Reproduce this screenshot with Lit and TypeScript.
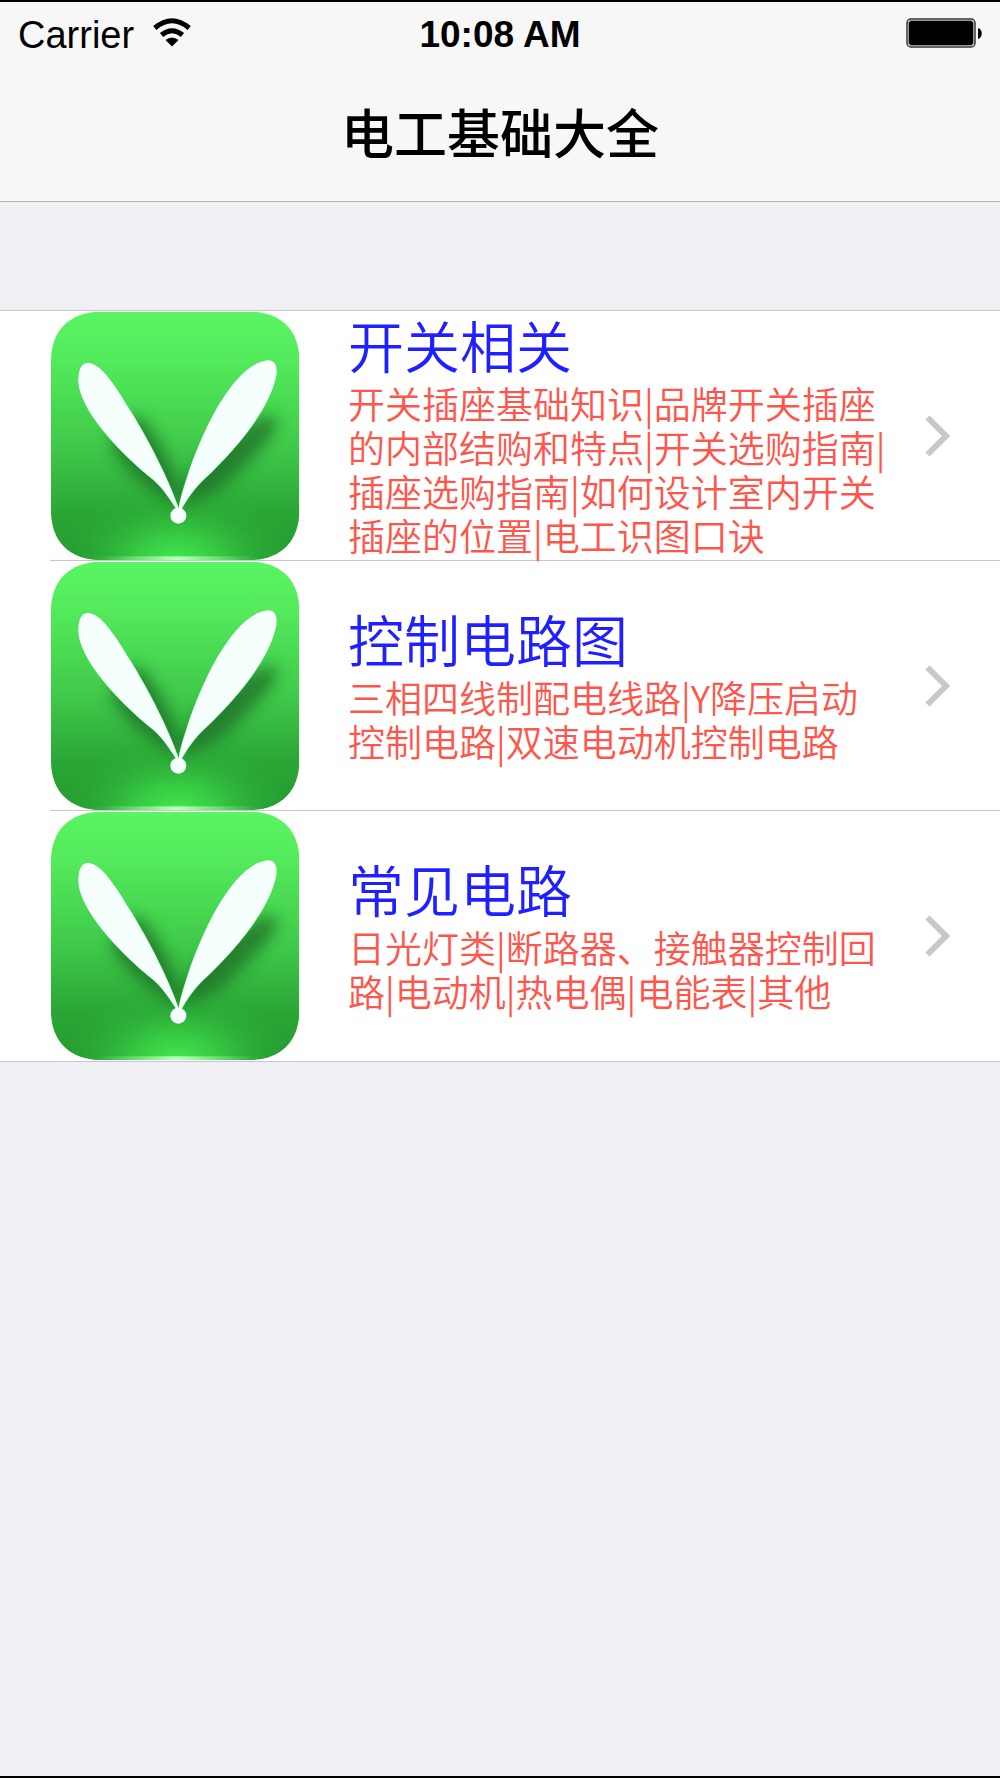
import { LitElement, html, css, svg } from "lit";
import { customElement, property } from "lit/decorators.js";

interface Topic {
  title: string;
  detail: string;
}

const topics: Topic[] = [
  {
    title: "开关相关",
    detail:
      "开关插座基础知识|品牌开关插座的内部结购和特点|开关选购指南|插座选购指南|如何设计室内开关插座的位置|电工识图口诀",
  },
  {
    title: "控制电路图",
    detail: "三相四线制配电线路|Y降压启动控制电路|双速电动机控制电路",
  },
  {
    title: "常见电路",
    detail: "日光灯类|断路器、接触器控制回路|电动机|热电偶|电能表|其他",
  },
];

const leaves = svg`
  <path d="M446 626 C434 594 424 568 414 546 C380 468 340 396 300 330 C262 268 216 190 174 188 C152 188 144 214 145 246 C150 330 262 450 356 528 C396 558 416 592 440 628 Z"/>
  <path d="M446 626 C450 600 460 566 470 536 C492 464 524 390 562 322 C606 246 660 184 716 181 C738 182 742 202 739 226 C722 320 630 436 522 538 C490 568 470 600 454 628 Z"/>`;

@customElement("leaf-icon")
export class LeafIcon extends LitElement {
  static styles = css`
    :host {
      display: block;
    }
    .art {
      display: block;
      width: 100%;
      height: 100%;
    }
  `;

  render() {
    return html`
      <svg class="art" viewBox="60 33 750 750" aria-hidden="true">
        <defs>
          <linearGradient id="base" x1="0" y1="0" x2="0" y2="1">
            <stop offset="0" stop-color="#5af563" />
            <stop offset="0.2" stop-color="#53ea5b" />
            <stop offset="0.55" stop-color="#3fc849" />
            <stop offset="0.8" stop-color="#2ba636" />
            <stop offset="1" stop-color="#249a30" />
          </linearGradient>
          <radialGradient
            id="glow"
            gradientUnits="userSpaceOnUse"
            cx="0"
            cy="0"
            r="1"
            gradientTransform="translate(440 780) scale(360 220)"
          >
            <stop offset="0" stop-color="#43e84f" />
            <stop offset="0.35" stop-color="#3cd848" stop-opacity="0.75" />
            <stop offset="0.7" stop-color="#34c040" stop-opacity="0.3" />
            <stop offset="1" stop-color="#2fb03a" stop-opacity="0" />
          </radialGradient>
          <linearGradient id="rim" x1="0" y1="0" x2="1" y2="0">
            <stop offset="0" stop-color="#7be884" stop-opacity="0" />
            <stop offset="0.5" stop-color="#c4ffc0" />
            <stop offset="1" stop-color="#7be884" stop-opacity="0" />
          </linearGradient>
          <filter id="soft" x="-20%" y="-20%" width="140%" height="140%">
            <feGaussianBlur stdDeviation="22" />
          </filter>
          <clipPath id="tile">
            <path
              d="M210 35 H662 C754 37 808 92 808 182 V632 C808 724 752 778 662 780 H210 C118 778 63 724 63 632 V182 C63 92 118 37 210 35 Z"
            />
          </clipPath>
        </defs>
        <g clip-path="url(#tile)">
          <rect x="60" y="33" width="750" height="750" fill="url(#base)" />
          <rect x="60" y="500" width="750" height="283" fill="url(#glow)" />
          <rect x="190" y="769" width="500" height="12" fill="url(#rim)" />
          <g filter="url(#soft)" fill="#1d6b28" opacity="0.75">
            <path
              d="M440 620 C390 580 310 550 250 450 C230 400 300 340 330 352 C390 410 430 510 446 560 Z"
            />
            <path
              d="M450 620 C460 540 520 460 610 400 C680 355 720 340 738 352 C752 400 670 470 600 540 C550 590 490 600 450 620 Z"
            />
          </g>
          <g fill="#f5fffe" stroke="#43e050" stroke-width="3">
            ${leaves}
          </g>
          <g fill="#f5fffe">
            ${leaves}
            <circle cx="445" cy="647" r="24" />
          </g>
        </g>
      </svg>
    `;
  }
}

@customElement("topic-row")
export class TopicRow extends LitElement {
  @property({ attribute: false }) topic!: Topic;

  static styles = css`
    :host {
      display: block;
    }
    .link {
      display: flex;
      align-items: center;
      min-height: 250px;
      padding: 0 50px;
      color: inherit;
      text-decoration: none;
    }
    .icon {
      flex: none;
      width: 250px;
      height: 250px;
    }
    .text {
      flex: 1;
      min-width: 0;
      margin: 0 33px 0 48px;
      padding-bottom: 4px;
      font-family: "Noto Sans CJK SC", sans-serif;
    }
    .title,
    .detail {
      margin: 0;
      font-weight: 350;
    }
    .title {
      font-size: 56px;
      line-height: 66px;
      color: #1f1fff;
    }
    .detail {
      margin-top: 4px;
      font-size: 37px;
      line-height: 44px;
      color: #ff564c;
    }
    .chevron {
      flex: none;
      width: 25px;
      height: 42px;
    }
  `;

  render() {
    return html`
      <a class="link" href="#">
        <leaf-icon class="icon"></leaf-icon>
        <div class="text">
          <h2 class="title">${this.topic.title}</h2>
          <p class="detail">${this.topic.detail}</p>
        </div>
        <svg class="chevron" viewBox="0 0 25 42" aria-hidden="true">
          <path d="M2.5 2.5 L21 21 L2.5 39.5" fill="none" stroke="#c7c7cc" stroke-width="6" />
        </svg>
      </a>
    `;
  }
}

@customElement("app-root")
export class AppRoot extends LitElement {
  static styles = css`
    :host {
      display: flex;
      flex-direction: column;
      box-sizing: border-box;
      min-height: 100vh;
      border-top: 2px solid #000;
      border-bottom: 2px solid #000;
      background: #efeff4;
      color: #000;
      font-family: "Liberation Sans", "Noto Sans CJK SC", sans-serif;
    }
    .header {
      background: #f7f7f7;
      border-bottom: 1px solid #b4b4b7;
    }
    .status {
      display: grid;
      grid-template-columns: 1fr auto 1fr;
      align-items: center;
      height: 62px;
      padding: 0 18px;
      box-sizing: border-box;
    }
    .carrier {
      display: flex;
      align-items: center;
      gap: 19px;
    }
    .network,
    .time {
      padding-top: 4px;
    }
    .network {
      font-size: 38px;
    }
    .wifi {
      width: 38px;
      height: 30px;
    }
    .time {
      font-size: 37px;
      font-weight: 700;
    }
    .battery {
      justify-self: end;
      width: 76px;
      height: 30px;
    }
    .heading {
      margin: 0;
      padding-top: 7px;
      font-size: 53px;
      line-height: 130px;
      font-weight: 500;
      text-align: center;
    }
    .list {
      margin: 108px 0 0;
      padding: 0;
      list-style: none;
      background: #fff;
      border-top: 1px solid #c8c7cc;
      border-bottom: 1px solid #c8c7cc;
    }
    .item:not(:last-child) {
      background: linear-gradient(#c8c7cc, #c8c7cc) 50px 100% / 100% 1px no-repeat;
    }
  `;

  render() {
    return html`
      <header class="header">
        <div class="status">
          <span class="carrier">
            <span class="network">Carrier</span>
            <svg class="wifi" viewBox="0 0 38 30" role="img" aria-label="Wi-Fi">
              <g fill="none" stroke="#000" stroke-width="5">
                <path d="M1.8 10 Q19 -4.5 36.2 10" />
                <path d="M8.5 17 Q19 8.5 29.5 17" />
              </g>
              <path d="M12.5 22 Q19 17 25.5 22 L19 28.5 Z" />
            </svg>
          </span>
          <time class="time">10:08 AM</time>
          <svg class="battery" viewBox="0 0 76 30" role="img" aria-label="Battery">
            <rect x="1" y="1" width="68" height="28" rx="4" fill="#fff" stroke="#333" stroke-width="1.5" />
            <rect x="2.5" y="2.5" width="65" height="25" rx="3" fill="#000" stroke="#999" stroke-width="1" />
            <path d="M72 10 C77 11 77 20 72 21 Z" />
          </svg>
        </div>
        <h1 class="heading">电工基础大全</h1>
      </header>
      <main>
        <ul class="list">
          ${topics.map(
            (topic) => html`<li class="item"><topic-row .topic=${topic}></topic-row></li>`
          )}
        </ul>
      </main>
    `;
  }
}
